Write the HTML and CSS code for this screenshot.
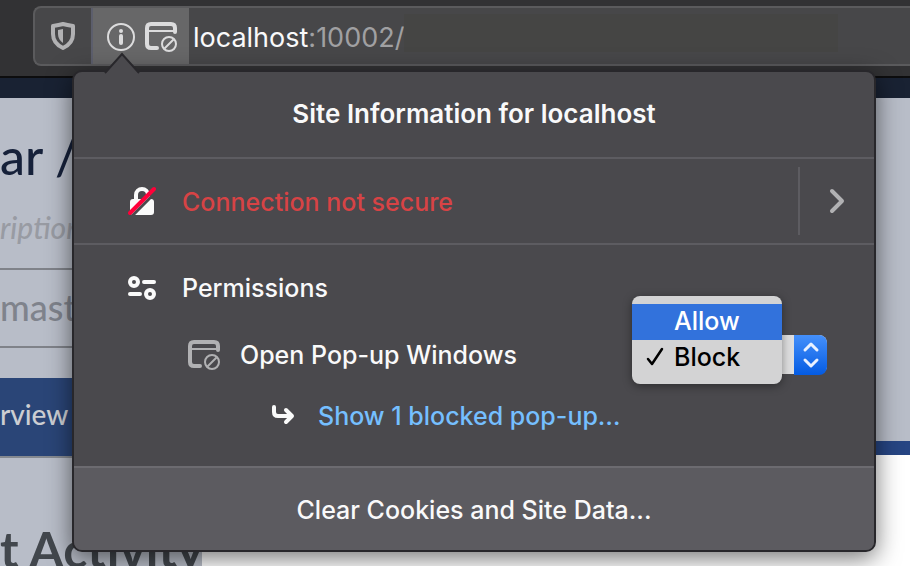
FILE: index.html
```html
<!DOCTYPE html>
<html lang="en">
<head>
<meta charset="utf-8">
<title>Site Information</title>
<link rel="stylesheet" href="styles.css">
</head>
<body>
<svg class="defs" aria-hidden="true">
  <symbol id="popup-blocked" viewBox="0 0 32 30">
    <path d="M12 26H6q-4 0-4-4V6q0-4 4-4h20q4 0 4 4v4" fill="none" stroke="currentColor" stroke-width="4" stroke-linecap="round"/>
    <path d="M3 9h26" stroke="currentColor" stroke-width="2"/>
    <circle cx="24" cy="22" r="7" fill="none" stroke="currentColor" stroke-width="2"/>
    <path d="M19.500 26.500l9-9" stroke="currentColor" stroke-width="2"/>
  </symbol>
</svg>

<header class="toolbar">
  <div class="urlbar">
    <button class="shield" aria-label="Tracking protection">
      <svg width="24" height="28" viewBox="0 0 24 28"><path d="M12 2c3.500 1 6.500 1.500 10 2v8c0 6-3.500 11-10 14C5.500 23 2 18 2 12V4c3.500-.5 6.500-1 10-2z" fill="none" stroke="currentColor" stroke-width="4" stroke-linejoin="round"/><path d="M12 7v14c-3-2-5-5-5-9V8z" fill="currentColor"/></svg>
    </button>
    <div class="identity">
      <button aria-label="Site information">
        <svg width="28" height="28" viewBox="0 0 28 28"><circle cx="14" cy="14" r="13" fill="none" stroke="currentColor" stroke-width="2"/><circle cx="14" cy="8" r="2" fill="currentColor"/><path d="M14 13v7" stroke="currentColor" stroke-width="4" stroke-linecap="round"/></svg>
      </button>
      <button aria-label="Blocked pop-ups"><svg width="32" height="30"><use href="#popup-blocked"/></svg></button>
    </div>
    <div class="address">localhost<span>:10002/</span></div>
    <div class="path"></div>
  </div>
</header>

<main class="site">
  <section class="column">
    <h1>ar /</h1>
    <p class="description">ription</p>
    <div class="branch">mast</div>
    <a class="tab" href="#overview">rview</a>
    <h2>t Activity</h2>
  </section>
  <div class="backdrop"></div>
</main>

<section class="panel" aria-labelledby="panel-title">
  <svg class="arrow" width="36" height="22" viewBox="0 0 36 22"><path d="M1 21L18 2l17 19" fill="#4a494d" stroke="#28272b" stroke-width="2"/><path d="M2 22l2-2h28l2 2z" fill="#4a494d"/></svg>
  <h2 class="panel-title" id="panel-title">Site Information for localhost</h2>
  <div class="connection">
    <svg class="row-icon" width="28" height="30" viewBox="0 0 28 30">
      <path d="M8 14V9a6 6 0 0 1 12 0v5" fill="none" stroke="#fafafa" stroke-width="4"/>
      <rect x="2" y="13" width="24" height="16" rx="3" fill="#fafafa"/>
      <path d="M3 31L29 5" stroke="#4a494d" stroke-width="3"/>
      <path d="M2 27L26 3" stroke="#ff0039" stroke-width="4" stroke-linecap="round"/>
    </svg>
    <span class="warning">Connection not secure</span>
    <button class="more" aria-label="Connection details">
      <svg width="16" height="26" viewBox="0 0 16 26"><path d="M3 3l10 10L3 23" fill="none" stroke="currentColor" stroke-width="4" stroke-linecap="round" stroke-linejoin="round"/></svg>
    </button>
  </div>
  <div class="permissions">
    <div class="row">
      <svg class="row-icon" width="28" height="24" viewBox="0 0 28 24"><g fill="none" stroke="#fafafa" stroke-width="4"><circle cx="6" cy="6" r="4"/><circle cx="22" cy="18" r="4"/><path d="M16 6h10M2 18h10" stroke-linecap="round"/></g></svg>
      <h3>Permissions</h3>
    </div>
    <div class="row permission">
      <svg class="popup-icon" width="32" height="30"><use href="#popup-blocked"/></svg>
      <label for="popup-setting">Open Pop-up Windows</label>
      <div class="picker">
        <select id="popup-setting"><option>Allow</option><option selected>Block</option></select>
        <svg class="stepper" width="33" height="40" viewBox="0 0 33 40"><path d="M11 15l6-6 6 6M11 25l6 6 6-6" fill="none" stroke="#eaf1ff" stroke-width="3" stroke-linecap="round" stroke-linejoin="round"/></svg>
        <div class="menu" role="listbox" aria-label="Open Pop-up Windows">
          <button class="active" role="option" aria-selected="false">Allow</button>
          <button role="option" aria-selected="true"><svg width="20" height="20" viewBox="0 0 20 20"><path d="M3 12l4 5L17 2" fill="none" stroke="#000" stroke-width="2.500" stroke-linecap="round" stroke-linejoin="round"/></svg>Block</button>
        </div>
      </div>
    </div>
    <div class="row blocked">
      <svg width="24" height="22" viewBox="0 0 24 22"><path d="M2 2v5q0 4 4 4h14M14 5l6 6-6 6" fill="none" stroke="#fafafa" stroke-width="4" stroke-linecap="round" stroke-linejoin="round"/></svg>
      <a href="#blocked">Show 1 blocked pop-up…</a>
    </div>
  </div>
  <button class="clear">Clear Cookies and Site Data...</button>
</section>
</body>
</html>
```
FILE: styles.css
```css
* { box-sizing: border-box; }

body {
  margin: 0;
  min-height: 100vh;
  display: flex;
  flex-direction: column;
  position: relative;
  overflow: hidden;
  background: #fff;
  font-family: Inter, "Liberation Sans", sans-serif;
  font-size: 25px;
  font-weight: 500;
  line-height: 32px;
}

h1, h2, h3, p { margin: 0; }
svg { display: block; flex: none; }
.defs { position: absolute; width: 0; height: 0; }

button {
  padding: 0;
  border: 0;
  background: none;
  color: inherit;
  font: inherit;
}

.toolbar {
  height: 78px;
  padding: 6px 0 0 33px;
  border-bottom: 2px solid #0d0d0e;
  background: #323234;
}

.urlbar {
  display: flex;
  height: 60px;
  border: 2px solid #5b5b5d;
  border-right: 0;
  border-radius: 8px 0 0 8px;
  background: #474749;
}

.shield {
  display: grid;
  place-items: center;
  width: 58px;
  border-right: 2px solid #5c5e6c;
  color: #b1b1b3;
}

.identity {
  display: flex;
  align-items: center;
  justify-content: center;
  gap: 10px;
  width: 96px;
  padding: 2px 0 0 2px;
  background: #676768;
  color: #dcdcdd;
}

.address {
  align-self: center;
  padding: 4px 0 0 4px;
  color: #f9f9fa;
  font-size: 27px;
  font-weight: 400;
}
.address span { color: #a0a0a2; }

.path {
  flex: 1;
  height: 38px;
  margin: 6px 72px 0 0;
  background: #454544;
}

.site {
  flex: none;
  display: grid;
  grid-template-columns: 202px 1fr;
  border-top: 20px solid #192233;
  font-family: Lato, "Noto Sans", sans-serif;
  font-weight: 500;
}

.column { background: #b8bdc8; }
.column h1 {
  padding-top: 26px;
  color: #16213a;
  font-size: 50px;
  font-weight: 500;
  line-height: 64px;
}
.description {
  padding: 23px 0 25px;
  color: #989ba3;
  font-size: 30px;
  font-style: italic;
}
.branch {
  height: 80px;
  border: solid #7f8289;
  border-width: 2px 0;
  color: #7f838c;
  font-size: 36px;
  line-height: 74px;
}
.tab {
  display: block;
  height: 80px;
  margin: 30px 0 60px;
  border-bottom: 2px solid #858990;
  background: #2a4577;
  color: #ccced2;
  font-size: 28px;
  line-height: 72px;
  text-decoration: none;
}
.column h2 {
  color: #42474d;
  font-size: 50px;
  line-height: 62px;
  white-space: nowrap;
}

.backdrop {
  height: 357px;
  border-bottom: 14px solid #264583;
  background: #b8bdc8;
}

.panel {
  position: absolute;
  top: 70px;
  left: 72px;
  right: 34px;
  border: 2px solid #28272b;
  border-radius: 10px;
  background: #4a494d;
  color: #f9f9fa;
  box-shadow: 0 6px 24px rgba(0, 0, 0, .55);
}

.arrow {
  position: absolute;
  top: -20px;
  left: 30px;
}

.panel-title {
  height: 87px;
  border-bottom: 2px solid #5d5c61;
  font-size: 26px;
  font-weight: 600;
  line-height: 84px;
  text-align: center;
}

.connection {
  display: flex;
  align-items: center;
  gap: 26px;
  height: 86px;
  padding-left: 54px;
  border-bottom: 2px solid #5d5c61;
}
.warning { flex: 1; padding-top: 2px; color: #d74345; }
.more {
  display: grid;
  place-items: center;
  width: 76px;
  height: 68px;
  border-left: 2px solid #5d5c61;
  color: #b1b1b3;
}

.permissions {
  display: grid;
  gap: 24px;
  padding: 27px 47px 34px 54px;
}
.row { display: flex; align-items: center; gap: 26px; }
.row h3 { font-size: 25px; font-weight: 500; }
.permission { gap: 20px; padding: 6px 0 0 60px; height: 48px; }
.popup-icon { color: #b1b1b3; }
.permission label { flex: 1; }

.picker {
  position: relative;
  width: 195px;
  height: 40px;
}
.picker select {
  appearance: none;
  width: 100%;
  height: 39px;
  padding: 0 42px;
  border: 0;
  border-radius: 8px;
  background: #dededf;
  color: #000;
  font: inherit;
}
.stepper {
  position: absolute;
  top: 0;
  right: 0;
  border-radius: 0 8px 8px 0;
  background: linear-gradient(#4590fb, #045be2);
  pointer-events: none;
}
.menu {
  position: absolute;
  top: -39px;
  left: 0;
  width: 150px;
  padding: 8px 0;
  border-radius: 8px;
  background: #d3d3d4;
  color: #000;
  box-shadow: 0 2px 10px rgba(0, 0, 0, .4);
}
.menu button {
  display: flex;
  align-items: center;
  gap: 9px;
  width: 100%;
  height: 36px;
  padding: 0 0 2px 13px;
}
.menu .active { padding-left: 42px; background: #3272dc; color: #fff; }

.blocked { gap: 22px; padding-left: 144px; }
.blocked a { color: #75bfff; text-decoration: none; }

.clear {
  display: block;
  width: 100%;
  height: 84px;
  padding-top: 2px;
  border-top: 2px solid #6c6b70;
  border-radius: 0 0 8px 8px;
  background: #5c5b60;
}
```
